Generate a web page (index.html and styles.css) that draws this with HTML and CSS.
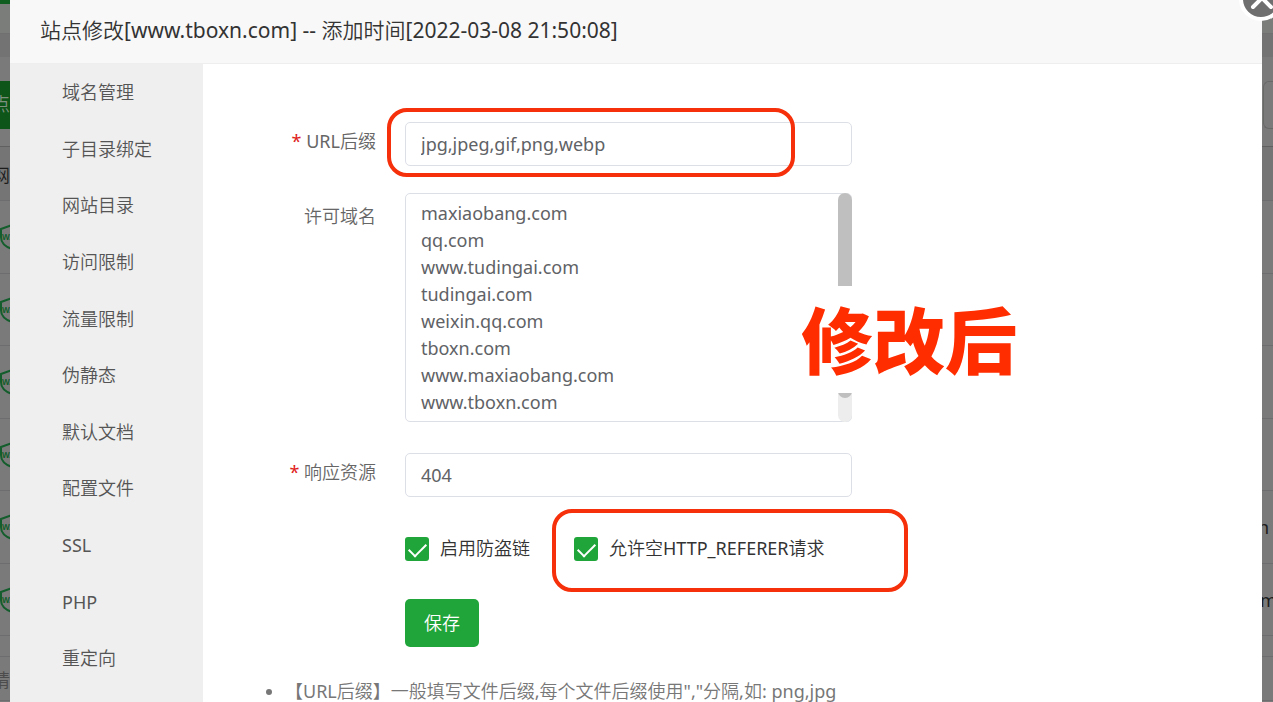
FILE: index.html
```html
<!DOCTYPE html>
<html lang="zh-CN">

<head>
    <meta charset="UTF-8">
    <title>站点修改</title>
    <link rel="stylesheet" href="styles.css">
</head>

<body>

    <!-- site list behind the dialog -->
    <div class="page">
        <div class="page-top"></div>
        <div class="page-gap"></div>
        <div class="page-tools"><span class="add">点</span><span class="search"></span></div>
        <div class="row head"><span>网</span></div>
        <div class="row"><svg class="waf" viewBox="0 0 24 26"><path d="M1 5L12 1l11 4v8c0 6-5 10-11 12C6 23 1 19 1 13z"/><text x="2" y="16">WAF</text></svg></div>
        <div class="row"><svg class="waf" viewBox="0 0 24 26"><path d="M1 5L12 1l11 4v8c0 6-5 10-11 12C6 23 1 19 1 13z"/><text x="2" y="16">WAF</text></svg></div>
        <div class="row"><svg class="waf" viewBox="0 0 24 26"><path d="M1 5L12 1l11 4v8c0 6-5 10-11 12C6 23 1 19 1 13z"/><text x="2" y="16">WAF</text></svg></div>
        <div class="row"><svg class="waf" viewBox="0 0 24 26"><path d="M1 5L12 1l11 4v8c0 6-5 10-11 12C6 23 1 19 1 13z"/><text x="2" y="16">WAF</text></svg></div>
        <div class="row"><svg class="waf" viewBox="0 0 24 26"><path d="M1 5L12 1l11 4v8c0 6-5 10-11 12C6 23 1 19 1 13z"/><text x="2" y="16">WAF</text></svg><span class="end short">n</span></div>
        <div class="row"><svg class="waf" viewBox="0 0 24 26"><path d="M1 5L12 1l11 4v8c0 6-5 10-11 12C6 23 1 19 1 13z"/><text x="2" y="16">WAF</text></svg><span class="end">m</span></div>
        <div class="row spacer"></div>
        <div class="row foot"><span>请</span></div>
    </div>

    <div class="dialog">
        <h1 class="title">站点修改[www.tboxn.com] -- 添加时间[2022-03-08 21:50:08]</h1>
        <button class="close" type="button" aria-label="关闭">
            <svg viewBox="0 0 44 44"><circle cx="22" cy="22" r="20"/><path d="M14 30l9-9 9 9M14 12l9 9 9-9"/></svg>
        </button>

        <div class="main">
            <nav class="menu">
                <a href="#">域名管理</a>
                <a href="#">子目录绑定</a>
                <a href="#">网站目录</a>
                <a href="#">访问限制</a>
                <a href="#">流量限制</a>
                <a href="#">伪静态</a>
                <a href="#">默认文档</a>
                <a href="#">配置文件</a>
                <a href="#">SSL</a>
                <a href="#">PHP</a>
                <a href="#">重定向</a>
            </nav>

            <form class="content">
                <div class="field">
                    <label for="suffix"><i>*</i> URL后缀</label>
                    <div class="control">
                        <input class="text" id="suffix" type="text" value="jpg,jpeg,gif,png,webp">
                        <span class="mark mark-suffix"></span>
                    </div>
                </div>

                <div class="field domains">
                    <label for="domains">许可域名</label>
                    <div class="control">
                        <textarea class="text" id="domains">maxiaobang.com
qq.com
www.tudingai.com
tudingai.com
weixin.qq.com
tboxn.com
www.maxiaobang.com
www.tboxn.com</textarea>
                        <span class="bar"><span class="thumb"></span></span>
                        <strong class="stamp">修改后</strong>
                    </div>
                </div>

                <div class="field">
                    <label for="status"><i>*</i> 响应资源</label>
                    <div class="control">
                        <input class="text" id="status" type="text" value="404">
                    </div>
                </div>

                <div class="checks">
                    <label><input type="checkbox" checked>启用防盗链</label>
                    <label><input type="checkbox" checked>允许空HTTP_REFERER请求<span class="mark mark-referer"></span></label>
                </div>

                <button class="save" type="button">保存</button>

                <ul class="help">
                    <li>【URL后缀】一般填写文件后缀,每个文件后缀使用","分隔,如: png,jpg</li>
                </ul>
            </form>
        </div>
    </div>

</body>

</html>
```

FILE: styles.css
```css
* {
    box-sizing: border-box;
}

body {
    margin: 0;
    height: 100vh;
    overflow: hidden;
    position: relative;
    font-family: "Noto Sans", "Noto Sans CJK SC DemiLight", "Noto Sans CJK SC", sans-serif;
    font-size: 18px;
    color: #666;
    background: #7a7a7a;
}

/* page behind the dialog */
.page-top {
    height: 34px;
    border-top: 4px solid #105f20;
    border-bottom: 1px solid #707070;
    background: #7b7d7b;
}

.page-gap {
    height: 23px;
    background: #737373;
}

.page-tools {
    height: 89px;
    padding-top: 24px;
    display: flex;
    justify-content: space-between;
}

.add {
    width: 100px;
    height: 48px;
    line-height: 46px;
    text-indent: -8px;
    background: #0d5518;
    color: #7f8f80;
}

.search {
    width: 10px;
    height: 48px;
    border: 1px solid #686a68;
    border-right: 0;
    border-radius: 6px 0 0 6px;
}

.row {
    display: flex;
    align-items: center;
    justify-content: space-between;
    height: 73px;
    border-bottom: 1px solid #6d6d6f;
    color: #1c1c1c;
}

.row:nth-child(even) {
    height: 72px;
}

.row.head {
    height: 55px;
    border-top: 1px solid #606060;
    background: #757575;
}

.row.head span,
.row.foot span {
    margin-left: -8px;
}

.row.spacer {
    height: 21px;
}

.row.foot {
    height: 44px;
    color: #4c4c4c;
}

.waf {
    width: 24px;
    height: 26px;
    fill: none;
    stroke: #145d2c;
    stroke-width: 2;
}

.waf text {
    fill: #145d2c;
    stroke: none;
    font-size: 8px;
    font-weight: bold;
}

.end {
    width: 13px;
}

.end.short {
    width: 15px;
}

/* dialog */
.dialog {
    position: absolute;
    top: 0;
    bottom: 0;
    left: 10px;
    right: 11px;
    display: flex;
    flex-direction: column;
    background: #fff;
}

.title {
    margin: 0;
    height: 64px;
    padding: 0 30px;
    border-bottom: 1px solid #eee;
    background: #f8f8f8;
    color: #333;
    font-size: 21px;
    font-weight: normal;
    line-height: 61px;
}

.close {
    position: absolute;
    top: -23px;
    right: -21px;
    width: 44px;
    height: 44px;
    padding: 0;
    border: 0;
    background: none;
}

.close svg {
    display: block;
    fill: #6f6f6f;
    stroke: #fff;
    stroke-width: 4;
    stroke-linecap: round;
}

.main {
    flex: 1;
    display: flex;
    min-height: 0;
}

.menu {
    width: 193px;
    padding-bottom: 15px;
    display: flex;
    flex-direction: column;
    background: #efefef;
}

.menu a {
    flex: 1 1 0;
    min-height: 0;
    padding-left: 52px;
    color: #555;
    line-height: 57px;
    text-decoration: none;
}

.content {
    flex: 1;
    padding: 58px 0 0 48px;
    overflow: hidden;
}

.field {
    display: flex;
    gap: 29px;
    margin-bottom: 27px;
}

.field.domains {
    margin-bottom: 31px;
}

.field > label {
    width: 125px;
    text-align: right;
    line-height: 38px;
}

.field.domains > label {
    line-height: 46px;
}

.field i {
    color: #e02020;
    font-style: normal;
}

.control {
    position: relative;
    width: 447px;
}

.text {
    display: block;
    width: 100%;
    height: 44px;
    padding: 0 15px;
    border: 1px solid #dcdfe6;
    border-radius: 5px;
    background: #fff;
    color: #606266;
    font: inherit;
    outline: none;
}

textarea.text {
    height: 229px;
    padding: 6px 15px;
    line-height: 27px;
    resize: none;
    overflow: hidden;
}

.bar {
    position: absolute;
    top: 0;
    right: 0;
    width: 14px;
    height: 100%;
    border-radius: 7px;
    background: #ededed;
}

.thumb {
    display: block;
    height: 205px;
    border-radius: 7px;
    background: #bfbfbf;
}

.stamp {
    position: absolute;
    top: 93px;
    left: 396px;
    padding-bottom: 6px;
    background: #fff;
    color: #ff2d00;
    font-family: "Noto Sans CJK SC", sans-serif;
    font-size: 72px;
    font-weight: 900;
    line-height: 101px;
    white-space: nowrap;
}

/* red frames drawn round the settings */
.mark {
    position: absolute;
    border: 4px solid #f5300a;
    border-radius: 20px;
    pointer-events: none;
}

.mark-suffix {
    top: -14px;
    left: -18px;
    width: 408px;
    height: 69px;
}

.mark-referer {
    top: -28px;
    left: -22px;
    width: 356px;
    height: 83px;
}

.checks {
    display: flex;
    gap: 44px;
    margin: 40px 0 38px 154px;
    color: #333;
}

.checks label {
    position: relative;
    display: flex;
    gap: 11px;
    height: 24px;
    line-height: 22px;
}

.checks input {
    appearance: none;
    width: 24px;
    height: 24px;
    margin: 0;
    border-radius: 3px;
    background: #20a53a;
    display: grid;
    place-items: center;
}

.checks input::before {
    content: "";
    width: 15px;
    height: 8px;
    margin-bottom: 3px;
    border: solid #fff;
    border-width: 0 0 2px 2px;
    transform: rotate(-45deg);
}

.save {
    display: block;
    height: 48px;
    margin-left: 154px;
    padding: 0 19px 2px;
    border: 0;
    border-radius: 5px;
    background: #20a53a;
    color: #fff;
    font: inherit;
}

.help {
    margin: 30px 0 0;
    padding-left: 34px;
    line-height: 28px;
    color: #777;
    white-space: nowrap;
}
```
